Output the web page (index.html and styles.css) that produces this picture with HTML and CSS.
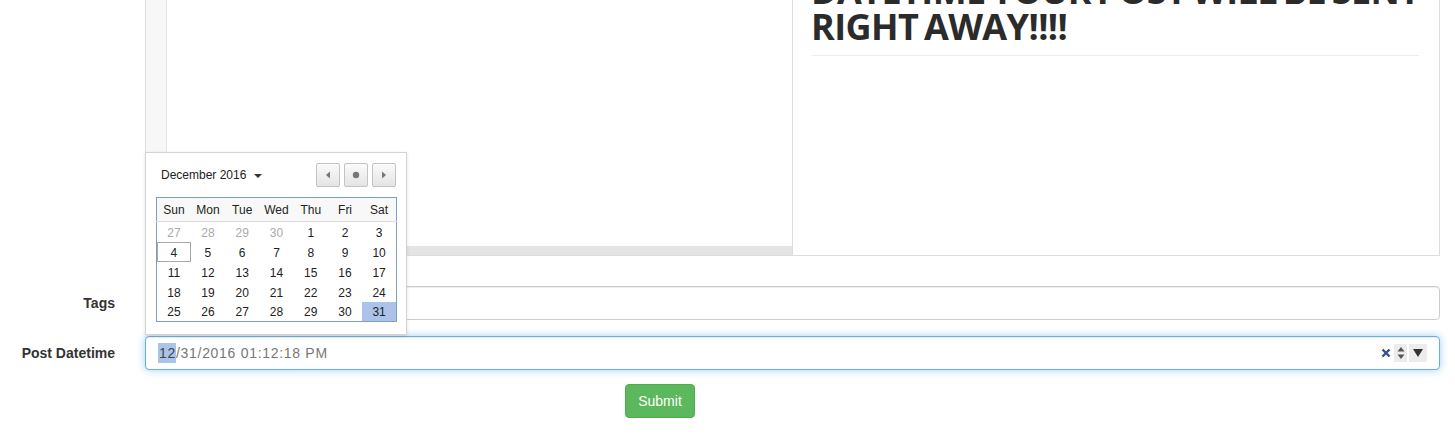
FILE: index.html
```html
<!doctype html>
<html lang="en">
    <head>
        <meta charset="UTF-8" />
        <title>New Post</title>
        <link rel="stylesheet" href="styles.css">
    </head>
    <body>
        <form class="post-form">
            <div class="form-row">
                <div class="form-label"></div>
                <div class="form-control-wrap">
                    <div class="editor">
                        <div class="editor-code">
                            <div class="code-area">
                                <div class="gutter"></div>
                                <div class="code"></div>
                            </div>
                            <div class="hscroll"></div>
                        </div>
                        <div class="editor-preview">
                            <h1>DATETIME YOUR POST WILL BE SENT<br>RIGHT AWAY!!!!</h1>
                            <hr>
                        </div>
                    </div>
                </div>
            </div>

            <div class="form-row row-tags">
                <label class="form-label">Tags</label>
                <div class="form-control-wrap">
                    <div class="text-input"></div>
                </div>
            </div>

            <div class="form-row row-date">
                <label class="form-label">Post Datetime</label>
                <div class="form-control-wrap">
                    <div class="text-input date-input">
                        <span class="date-value"><span class="date-sel">12</span>/31/2016 01:12:18 PM</span>
                        <span class="date-clear">
                            <svg width="10" height="10" viewBox="0 0 10 10"><path d="M1.5 1.5 L8.5 8.5 M8.5 1.5 L1.5 8.5" stroke="#34508f" stroke-width="2.4"/></svg>
                        </span>
                        <span class="date-spin">
                            <svg width="10" height="16" viewBox="0 0 10 16"><path d="M5 2 L8.5 6.5 L1.5 6.5 Z M1.5 9.5 L8.5 9.5 L5 14 Z" fill="#555"/></svg>
                        </span>
                        <span class="date-drop">
                            <svg width="12" height="10" viewBox="0 0 12 10"><path d="M1 1 L11 1 L6 9 Z" fill="#333"/></svg>
                        </span>
                    </div>
                </div>
            </div>

            <div class="form-row row-submit">
                <button type="button" class="btn-submit">Submit</button>
            </div>

            <!-- datetime picker popup -->
            <div class="picker">
                <div class="picker-head">
                    <span class="picker-title">December 2016 <span class="caret"></span></span>
                    <div class="picker-nav">
                        <span class="nav-btn"><svg width="6" height="8" viewBox="0 0 6 8"><path d="M5 0.5 L5 7.5 L1 4 Z" fill="#777"/></svg></span>
                        <span class="nav-btn"><svg width="8" height="8" viewBox="0 0 8 8"><circle cx="4" cy="4" r="3.2" fill="#777"/></svg></span>
                        <span class="nav-btn"><svg width="6" height="8" viewBox="0 0 6 8"><path d="M1 0.5 L1 7.5 L5 4 Z" fill="#777"/></svg></span>
                    </div>
                </div>
                <table class="cal">
                    <thead>
                        <tr><th>Sun</th><th>Mon</th><th>Tue</th><th>Wed</th><th>Thu</th><th>Fri</th><th>Sat</th></tr>
                    </thead>
                    <tbody>
                        <tr><td class="other">27</td><td class="other">28</td><td class="other">29</td><td class="other">30</td><td>1</td><td>2</td><td>3</td></tr>
                        <tr><td class="today">4</td><td>5</td><td>6</td><td>7</td><td>8</td><td>9</td><td>10</td></tr>
                        <tr><td>11</td><td>12</td><td>13</td><td>14</td><td>15</td><td>16</td><td>17</td></tr>
                        <tr><td>18</td><td>19</td><td>20</td><td>21</td><td>22</td><td>23</td><td>24</td></tr>
                        <tr><td>25</td><td>26</td><td>27</td><td>28</td><td>29</td><td>30</td><td class="selected">31</td></tr>
                    </tbody>
                </table>
            </div>
        </form>
    </body>
</html>
```

FILE: styles.css
```css
* {
    box-sizing: border-box;
}

body {
    margin: 0;
    font-family: 'Liberation Sans', Arial, sans-serif;
    font-size: 14px;
    color: #333;
    background: #fff;
}

.post-form {
    position: relative;
}

.form-row {
    display: flex;
    align-items: center;
}

.form-label {
    width: 145px;
    padding-right: 30px;
    text-align: right;
    font-weight: bold;
    flex-shrink: 0;
}

.form-control-wrap {
    width: 1295px;
}

.row-tags {
    margin-top: 30px;
}

.row-date {
    margin-top: 16px;
}

.row-submit {
    margin-top: 14px;
    padding-left: 625px;
}

/* editor */
.editor {
    display: flex;
    height: 256px;
    border: 1px solid #ddd;
    border-top: 0;
}

.editor-code {
    width: 646px;
    display: flex;
    flex-direction: column;
}

.code-area {
    flex: 1;
    display: flex;
}

.gutter {
    width: 21px;
    background: #f7f7f7;
    border-right: 1px solid #e6e6e6;
}

.code {
    flex: 1;
}

.hscroll {
    height: 9px;
    background: #e4e4e4;
}

.editor-preview {
    flex: 1;
    border-left: 1px solid #ddd;
    padding: 0 20px 0 18px;
    overflow: hidden;
}

.editor-preview h1 {
    font-family: 'Open Sans', sans-serif;
    font-weight: 700;
    font-size: 36px;
    line-height: 36px;
    letter-spacing: -0.6px;
    word-spacing: -3px;
    color: #2b2b2b;
    margin: -27px 0 0;
    white-space: nowrap;
}

.editor-preview hr {
    border: 0;
    border-top: 1px solid #eee;
    margin: 10px 0 0 1px;
}

/* inputs */
.text-input {
    height: 34px;
    border: 1px solid #ccc;
    border-radius: 4px;
    box-shadow: inset 0 1px 1px rgba(0, 0, 0, 0.075);
    background: #fff;
}

.date-input {
    display: flex;
    align-items: center;
    padding: 0 12px 0 12px;
    border-color: #66afe9;
    box-shadow:
        inset 0 1px 1px rgba(0, 0, 0, 0.075),
        0 0 8px rgba(102, 175, 233, 0.6);
}

.date-value {
    flex: 1;
    color: #777;
    letter-spacing: 0.7px;
}

.date-sel {
    background: #a9c4ea;
    color: #444;
    padding: 2px 0 2px 1px;
}

.date-clear {
    display: flex;
    margin-right: 3px;
}

.date-spin {
    display: flex;
    align-items: center;
    justify-content: center;
    width: 13px;
    height: 18px;
    background: #ececec;
}

.date-drop {
    display: flex;
    align-items: center;
    justify-content: center;
    width: 18px;
    height: 18px;
    margin-left: 2px;
    background: #ececec;
}

.btn-submit {
    width: 70px;
    height: 34px;
    border: 1px solid #4cae4c;
    border-radius: 4px;
    background: #5cb85c;
    color: #fff;
    font-family: 'Liberation Sans', Arial, sans-serif;
    font-size: 14px;
    padding: 0;
}

/* picker popup */
.picker {
    position: absolute;
    left: 145px;
    top: 152px;
    width: 262px;
    height: 183px;
    padding: 10px 9px 9px 10px;
    background: #fff;
    border: 1px solid #d4d4d4;
    box-shadow: 0 1px 3px rgba(0, 0, 0, 0.12);
    font-size: 12px;
    color: #222;
}

.picker-head {
    display: flex;
    align-items: center;
    justify-content: space-between;
    height: 24px;
}

.picker-title {
    padding-left: 5px;
}

.caret {
    display: inline-block;
    margin-left: 4px;
    vertical-align: middle;
    border-top: 4px solid #333;
    border-left: 4px solid transparent;
    border-right: 4px solid transparent;
}

.picker-nav {
    display: flex;
    gap: 4px;
    margin-right: 1px;
}

.nav-btn {
    display: flex;
    align-items: center;
    justify-content: center;
    width: 24px;
    height: 24px;
    border: 1px solid #c4c4c4;
    border-radius: 2px;
    background: linear-gradient(#fbfbfb, #e4e4e4);
}

.cal {
    margin-top: 10px;
    width: 241px;
    table-layout: fixed;
    border-collapse: collapse;
    border: 1px solid #7f9fbe;
}

.cal th {
    height: 24px;
    font-weight: normal;
    background: #f8f8f8;
    border-bottom: 1px solid #dcdcdc;
    padding: 0;
}

.cal td {
    height: 20px;
    padding: 2px 0 0;
    text-align: center;
}

.cal td.other {
    color: #aaa;
}

.cal td.today {
    box-shadow: inset 0 0 0 1px #a8a8a8;
}

.cal td.selected {
    background: #abc3e8;
}
```
